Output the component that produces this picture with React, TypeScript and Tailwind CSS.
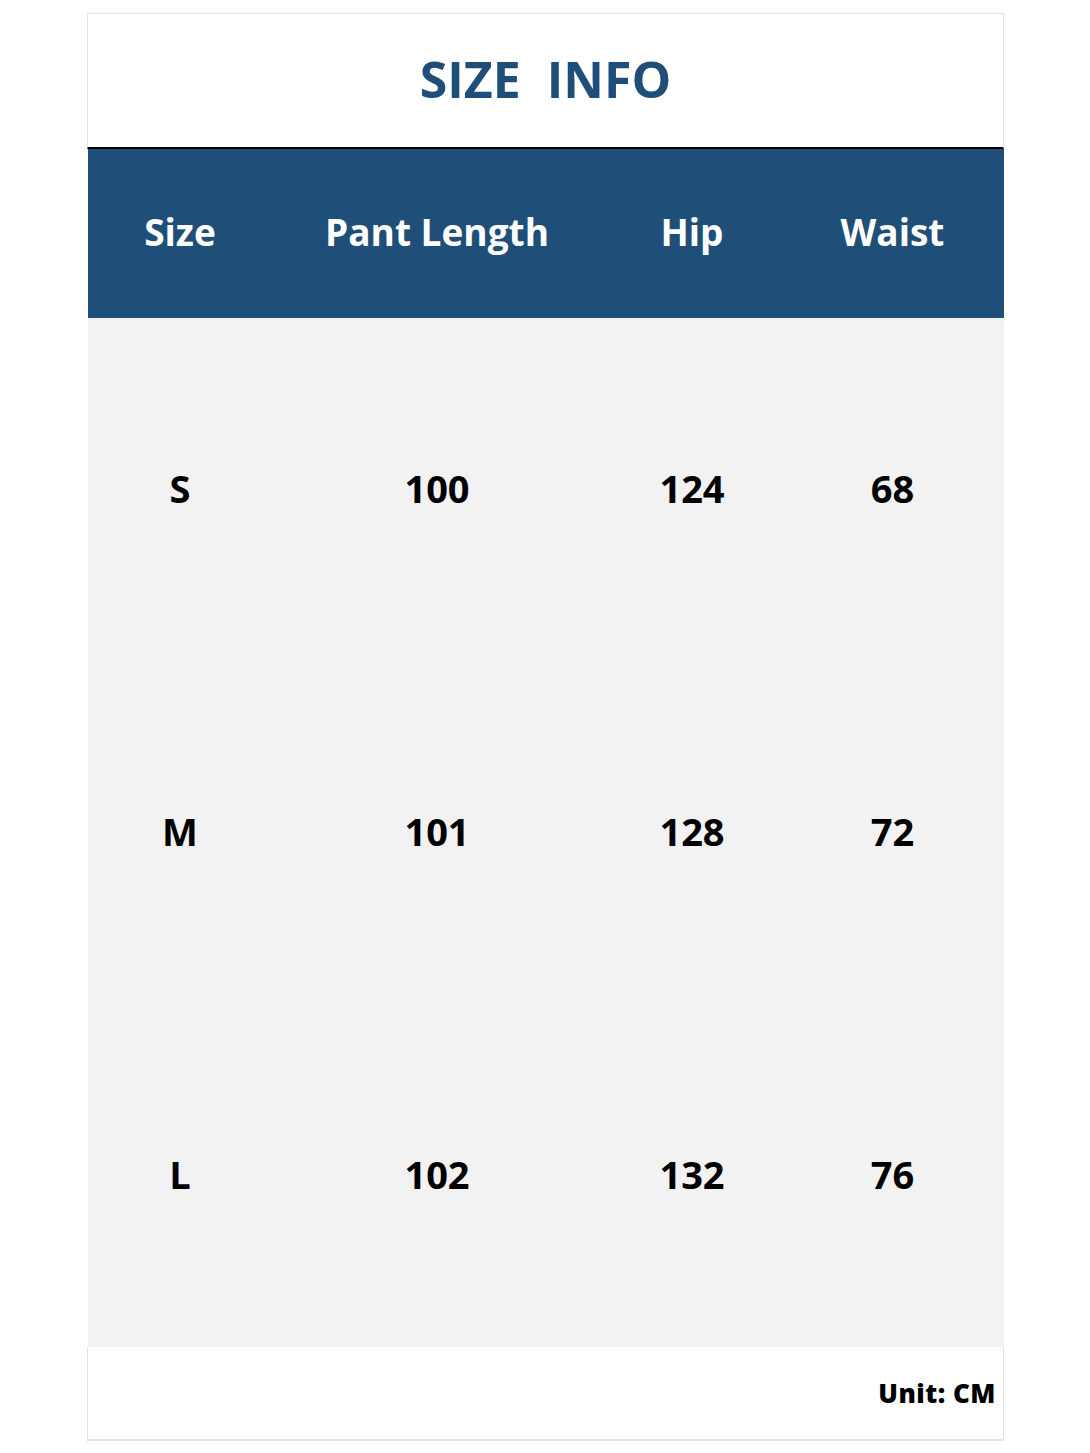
const rows = [
  { size: "S", length: "100", hip: "124", waist: "68" },
  { size: "M", length: "101", hip: "128", waist: "72" },
  { size: "L", length: "102", hip: "132", waist: "76" },
];

const cols = "grid grid-cols-[184px_330px_180px_221px]";

export default function App() {
  return (
    <div className="min-h-[1453px] bg-white pt-[13px] font-['Open_Sans','Noto_Sans',sans-serif]">
      <div className="ml-[87px] w-[917px]">
        <div className="h-[136px] border-x border-t border-[#e3e3e3] border-b-2 border-b-black flex items-center justify-center">
          <h1 className="text-[50px] font-bold text-[#1f4e79] whitespace-pre pb-[3px]">SIZE  INFO</h1>
        </div>
        <div className={`${cols} h-[169px] bg-[#1f4e79] ml-px items-center text-white text-[37px] font-bold text-center pb-[3px]`}>
          <div>Size</div>
          <div>Pant Length</div>
          <div>Hip</div>
          <div>Waist</div>
        </div>
        <div className="bg-[#f2f2f2] ml-px">
          {rows.map((r) => (
            <div key={r.size} className={`${cols} h-[343px] items-center text-center text-[38px] font-bold text-black pb-[3px]`}>
              <div>{r.size}</div>
              <div>{r.length}</div>
              <div>{r.hip}</div>
              <div>{r.waist}</div>
            </div>
          ))}
        </div>
        <div className="h-[94px] border-x border-b-2 border-[#e3e3e3] flex items-center justify-end pr-[7px]">
          <span className="text-[26px] font-black text-black tracking-[0.5px]">Unit: CM</span>
        </div>
      </div>
    </div>
  );
}
